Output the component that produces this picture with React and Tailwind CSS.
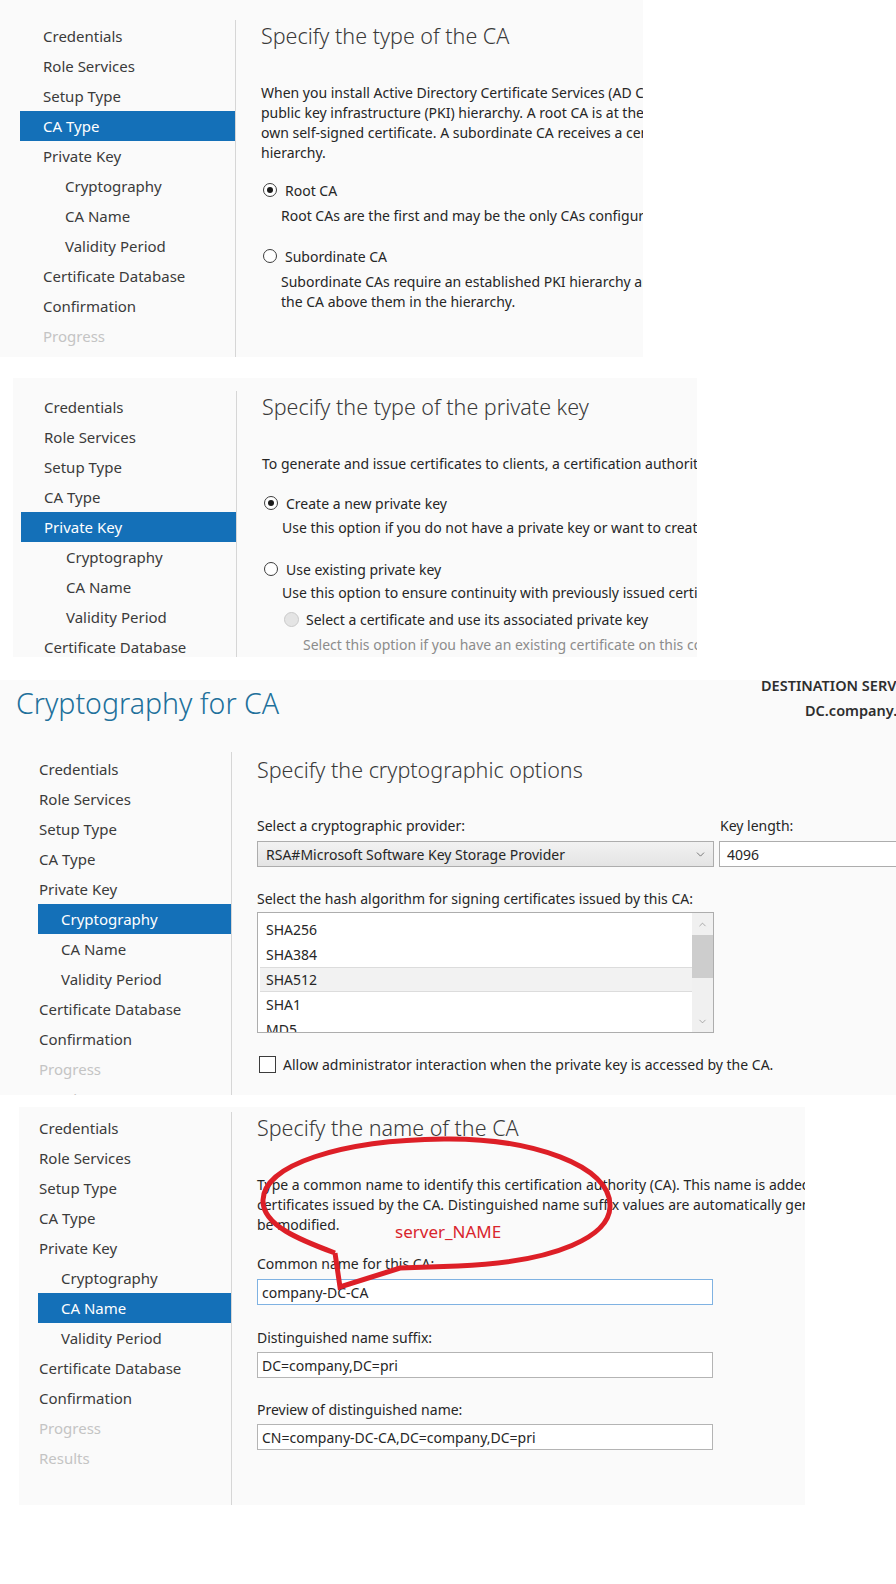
import { ChevronDown, ChevronUp } from "lucide-react";

const steps = [
  { label: "Credentials" },
  { label: "Role Services" },
  { label: "Setup Type" },
  { label: "CA Type" },
  { label: "Private Key" },
  { label: "Cryptography", sub: true },
  { label: "CA Name", sub: true },
  { label: "Validity Period", sub: true },
  { label: "Certificate Database" },
  { label: "Confirmation" },
  { label: "Progress", off: true },
  { label: "Results", off: true },
];

const StepList = ({ active, count }) => (
  <div className="text-[15px]">
    {steps.slice(0, count).map((s) => {
      const on = s.label === active;
      return (
        <div
          key={s.label}
          className={`h-[30px] flex items-center pl-[23px] whitespace-nowrap ${s.sub ? "ml-[22px]" : ""} ${
            on ? "bg-[#1470b8] text-white" : s.off ? "text-[#c4c4c4]" : "text-[#3b3b3b]"
          }`}
        >
          {s.label}
        </div>
      );
    })}
  </div>
);

const Heading = ({ children }) => (
  <h2 className="h-[30px] leading-[30px] text-[21.5px] font-light text-[#3a3a3a] whitespace-nowrap">
    {children}
  </h2>
);

const Line = ({ children, className = "" }) => (
  <div className={`h-[20px] leading-[20px] whitespace-nowrap ${className}`}>{children}</div>
);

const Radio = ({ checked, disabled }) => (
  <span
    className={`rounded-full border flex items-center justify-center shrink-0 ${
      disabled ? "w-[15px] h-[15px] border-[#cacaca] bg-[#e4e4e4]" : "w-[14px] h-[14px] border-[#3c3c3c] bg-white"
    }`}
  >
    {checked && <span className="w-[6px] h-[6px] rounded-full bg-[#1a1a1a]" />}
  </span>
);

const Field = ({ value, focus }) => (
  <div
    className={`h-[26px] w-[456px] bg-white border flex items-center pl-[4px] whitespace-nowrap ${
      focus ? "border-[#7fb2e2]" : "border-[#b4b4b4]"
    }`}
  >
    {value}
  </div>
);

const CaTypePanel = () => (
  <section className="flex h-[357px] w-[643px] overflow-hidden bg-[#fafafa]">
    <div className="w-[236px] shrink-0 mt-[20px] pt-[1px] pl-[20px] border-r border-[#d6d6d6]">
      <StepList active="CA Type" count={11} />
    </div>
    <div className="pl-[25px] pt-[21px] text-[#262626]">
      <Heading>Specify the type of the CA</Heading>
      <div className="mt-[32px]">
        <Line>When you install Active Directory Certificate Services (AD CS), you are creating or extending a</Line>
        <Line>public key infrastructure (PKI) hierarchy. A root CA is at the top of the PKI hierarchy and issues its</Line>
        <Line>own self-signed certificate. A subordinate CA receives a certificate from the CA above it in the PKI</Line>
        <Line>hierarchy.</Line>
      </div>
      <div className="mt-[17px] h-[20px] flex items-center gap-[8px] pl-[2px] whitespace-nowrap">
        <Radio checked />
        <span>Root CA</span>
      </div>
      <Line className="mt-[6px] pl-[20px]">Root CAs are the first and may be the only CAs configured in a PKI hierarchy.</Line>
      <div className="mt-[20px] h-[20px] flex items-center gap-[8px] pl-[2px] whitespace-nowrap">
        <Radio />
        <span>Subordinate CA</span>
      </div>
      <div className="mt-[6px] pl-[20px]">
        <Line>Subordinate CAs require an established PKI hierarchy and are authorized to issue certificates by</Line>
        <Line>the CA above them in the hierarchy.</Line>
      </div>
    </div>
  </section>
);

const PrivateKeyPanel = () => (
  <section className="flex mt-[21px] ml-[13px] h-[279px] w-[684px] overflow-hidden bg-[#fafafa]">
    <div className="w-[224px] shrink-0 mt-[13px] pt-[1px] pl-[8px] border-r border-[#d6d6d6]">
      <StepList active="Private Key" count={10} />
    </div>
    <div className="pl-[25px] pt-[14px] text-[#262626]">
      <Heading>Specify the type of the private key</Heading>
      <Line className="mt-[32px]">
        To generate and issue certificates to clients, a certification authority (CA) must have a private key.
      </Line>
      <div className="mt-[19px] h-[20px] flex items-center gap-[8px] pl-[2px] whitespace-nowrap">
        <Radio checked />
        <span>Create a new private key</span>
      </div>
      <Line className="mt-[5px] pl-[20px]">
        Use this option if you do not have a private key or want to create a new private key.
      </Line>
      <div className="mt-[21px] h-[20px] flex items-center gap-[8px] pl-[2px] whitespace-nowrap">
        <Radio />
        <span>Use existing private key</span>
      </div>
      <Line className="mt-[4px] pl-[20px]">
        Use this option to ensure continuity with previously issued certificates when reinstalling a CA.
      </Line>
      <div className="mt-[6px] h-[20px] flex items-center gap-[7px] pl-[22px] whitespace-nowrap">
        <Radio disabled />
        <span>Select a certificate and use its associated private key</span>
      </div>
      <Line className="mt-[6px] pl-[41px] text-[#8c8c8c]">
        Select this option if you have an existing certificate on this computer or if you want to import a
      </Line>
    </div>
  </section>
);

const hashes = ["SHA256", "SHA384", "SHA512", "SHA1", "MD5"];

const CryptoPanel = () => (
  <section className="mt-[23px] h-[415px] w-full overflow-hidden bg-[#fafafa]">
    <header className="flex h-[72px]">
      <h1 className="w-[761px] shrink-0 pl-[16px] pt-[6px] leading-[34px] text-[28.5px] font-light text-[#21709b] whitespace-nowrap">
        Cryptography for CA
      </h1>
      <div className="-mt-[3px] text-[14.5px] font-semibold text-[#2e2e2e] whitespace-nowrap">
        <div className="h-[16px] leading-[16px]">DESTINATION SERVER</div>
        <div className="mt-[9px] h-[16px] leading-[16px] pl-[44px]">DC.company.pri</div>
      </div>
    </header>
    <div className="flex h-[343px]">
      <div className="w-[232px] shrink-0 pt-[2px] pl-[16px] border-r border-[#d6d6d6]">
        <StepList active="Cryptography" count={12} />
      </div>
      <div className="pl-[25px] pt-[3px] text-[#262626]">
        <Heading>Specify the cryptographic options</Heading>
        <div className="mt-[31px] flex gap-[5px]">
          <div className="w-[457px]">
            <Line>Select a cryptographic provider:</Line>
            <div className="mt-[5px] h-[26px] flex items-center justify-between pl-[8px] pr-[6px] border border-[#adadad] bg-gradient-to-b from-[#f2f2f2] to-[#e4e4e4] whitespace-nowrap">
              <span>RSA#Microsoft Software Key Storage Provider</span>
              <ChevronDown size={13} strokeWidth={1.4} className="text-[#555]" />
            </div>
          </div>
          <div>
            <Line className="pl-[1px]">Key length:</Line>
            <div className="mt-[5px] h-[26px] w-[200px] flex items-center pl-[7px] border border-[#adadad] bg-white">
              4096
            </div>
          </div>
        </div>
        <Line className="mt-[22px]">Select the hash algorithm for signing certificates issued by this CA:</Line>
        <div className="mt-[3px] h-[121px] w-[457px] flex border border-[#adadad] bg-white overflow-hidden">
          <div className="flex-1 pt-[4px] pl-[2px]">
            {hashes.map((h) => (
              <div
                key={h}
                className={`h-[25px] flex items-center pl-[6px] ${
                  h === "SHA512" ? "bg-[#f2f2f2] border-y border-[#dcdcdc]" : ""
                }`}
              >
                {h}
              </div>
            ))}
          </div>
          <div className="w-[21px] bg-[#f0f0f0] flex flex-col items-center">
            <div className="h-[22px] flex items-center justify-center">
              <ChevronUp size={11} strokeWidth={1.5} className="text-[#8a8a8a]" />
            </div>
            <div className="w-[21px] h-[43px] bg-[#cdcdcd]" />
            <div className="flex-1" />
            <div className="h-[22px] flex items-center justify-center">
              <ChevronDown size={11} strokeWidth={1.5} className="text-[#8a8a8a]" />
            </div>
          </div>
        </div>
        <div className="mt-[21px] h-[20px] flex items-center gap-[7px] pl-[2px] whitespace-nowrap">
          <span className="w-[17px] h-[17px] border border-[#3c3c3c] bg-white shrink-0" />
          <span>Allow administrator interaction when the private key is accessed by the CA.</span>
        </div>
      </div>
    </div>
  </section>
);

const CaNamePanel = () => (
  <section className="relative flex mt-[12px] ml-[19px] h-[398px] w-[786px] overflow-hidden bg-[#fafafa]">
    <div className="w-[213px] shrink-0 mt-[5px] pt-[1px] border-r border-[#d6d6d6]">
      <div className="-ml-[3px]">
        <StepList active="CA Name" count={12} />
      </div>
    </div>
    <div className="pl-[25px] pt-[6px] text-[#262626]">
      <Heading>Specify the name of the CA</Heading>
      <div className="mt-[32px]">
        <Line>Type a common name to identify this certification authority (CA). This name is added to all</Line>
        <Line>certificates issued by the CA. Distinguished name suffix values are automatically generated and can</Line>
        <Line>be modified.</Line>
      </div>
      <Line className="mt-[19px]">Common name for this CA:</Line>
      <div className="mt-[5px]">
        <Field value="company-DC-CA" focus />
      </div>
      <Line className="mt-[23px]">Distinguished name suffix:</Line>
      <div className="mt-[4px]">
        <Field value="DC=company,DC=pri" />
      </div>
      <Line className="mt-[22px]">Preview of distinguished name:</Line>
      <div className="mt-[4px]">
        <Field value="CN=company-DC-CA,DC=company,DC=pri" />
      </div>
    </div>

    {/* red annotation drawn over the form */}
    <svg
      className="absolute inset-0 pointer-events-none"
      width="786"
      height="398"
      viewBox="19 1107 786 398"
    >
      <path
        d="M335,1253 C300,1240 262,1225 263,1200 C264,1165 340,1140 444,1139 C530,1138 612,1165 610,1207 C609,1235 560,1262 458,1266 L400,1268 L340,1287 L335,1253"
        fill="none"
        stroke="#dd1f27"
        strokeWidth="5"
        strokeLinejoin="miter"
      />
    </svg>
    <span className="absolute left-[376px] top-[114px] leading-[22px] text-[17px] text-[#d9252d] whitespace-nowrap">
      server_NAME
    </span>
  </section>
);

export default function App() {
  return (
    <div className="min-h-[1584px] bg-white text-[14px] font-['Noto_Sans',sans-serif]">
      <CaTypePanel />
      <PrivateKeyPanel />
      <CryptoPanel />
      <CaNamePanel />
    </div>
  );
}
